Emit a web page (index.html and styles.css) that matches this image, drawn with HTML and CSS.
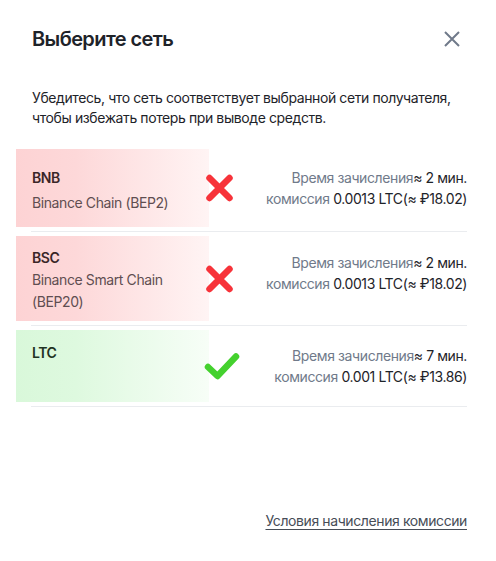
FILE: index.html
```html
<!DOCTYPE html>
<html lang="ru">
<head>
<meta charset="utf-8">
<link rel="stylesheet" href="styles.css">
</head>
<body>
<div class="modal">
  <div class="header">
    <h1 class="title">Выберите сеть</h1>
    <button class="close" aria-label="Закрыть">
      <svg width="18" height="18" viewBox="0 0 18 18"><path d="M2 2 L16 16 M16 2 L2 16" stroke="#707a8a" stroke-width="2" fill="none"/></svg>
    </button>
  </div>
  <p class="desc">Убедитесь, что сеть соответствует выбранной сети получателя, чтобы избежать потерь при выводе средств.</p>
  <div class="list">
    <div class="row">
      <div class="block bad h1">
        <div class="left">
          <div class="name">BNB</div>
          <div class="sub">Binance Chain (BEP2)</div>
        </div>
        <div class="right">
          <div><span class="lbl">Время зачисления</span>≈ 2 мин.</div>
          <div><span class="lbl">комиссия </span>0.0013 LTC(≈ ₽18.02)</div>
        </div>
      </div>
      <svg class="mark cross" width="29" height="29" viewBox="0 0 29 29"><path d="M4.5 4.5 L24.5 24.5 M24.5 4.5 L4.5 24.5" stroke="#f7333a" stroke-width="6.5" stroke-linecap="round" fill="none"/></svg>
    </div>
    <div class="row">
      <div class="block bad h2">
        <div class="left">
          <div class="name">BSC</div>
          <div class="sub">Binance Smart Chain<br>(BEP20)</div>
        </div>
        <div class="right">
          <div><span class="lbl">Время зачисления</span>≈ 2 мин.</div>
          <div><span class="lbl">комиссия </span>0.0013 LTC(≈ ₽18.02)</div>
        </div>
      </div>
      <svg class="mark cross" width="29" height="29" viewBox="0 0 29 29"><path d="M4.5 4.5 L24.5 24.5 M24.5 4.5 L4.5 24.5" stroke="#f7333a" stroke-width="6.5" stroke-linecap="round" fill="none"/></svg>
    </div>
    <div class="row">
      <div class="block good h3">
        <div class="left">
          <div class="name">LTC</div>
          <div class="sub"></div>
        </div>
        <div class="right">
          <div><span class="lbl">Время зачисления</span>≈ 7 мин.</div>
          <div><span class="lbl">комиссия </span>0.001 LTC(≈ ₽13.86)</div>
        </div>
      </div>
      <svg class="mark check" width="36" height="29" viewBox="0 0 36 29"><path d="M4 15.5 L13.5 24.5 L32 5" stroke="#44d12e" stroke-width="6.5" stroke-linecap="round" stroke-linejoin="round" fill="none"/></svg>
    </div>
  </div>
  <div class="footer">
    <a class="link" href="#">Условия начисления комиссии</a>
  </div>
</div>
</body>
</html>
```

FILE: styles.css
```css
* { box-sizing: border-box; }
html, body {
  margin: 0;
  padding: 0;
  background: #ffffff;
}
body {
  font-family: Inter, "Noto Sans", sans-serif;
  color: #1e2329;
  letter-spacing: -0.4px;
}
.modal {
  min-height: 561px;
  display: flex;
  flex-direction: column;
  padding: 23px 29px 30px 31px;
}
.header {
  display: flex;
  justify-content: space-between;
  align-items: center;
  height: 32px;
}
.title {
  margin: 0 0 0 1px;
  font-size: 20px;
  line-height: 28px;
  font-weight: 600;
  letter-spacing: -0.6px;
  color: #1e2329;
}
.close {
  border: 0;
  background: none;
  padding: 0;
  margin-right: 6px;
  width: 18px;
  height: 18px;
  display: flex;
}
.desc {
  margin: 33px 0 0 1px;
  font-size: 14px;
  line-height: 20px;
  color: #1e2329;
}
.list {
  margin-top: 17px;
}
.row {
  position: relative;
  padding: 4px 0;
  border-bottom: 1px solid #eaecef;
}
.block {
  display: flex;
  justify-content: space-between;
  align-items: center;
  margin-left: -15px;
  padding-left: 16px;
}
.block.h1 { height: 78px; }
.block.h2 { height: 85px; }
.block.h3 { height: 72px; }
.h1 .left { padding-top: 5px; }
.h2 .left { padding-top: 4px; gap: 1px; }
.h2 .right { margin-bottom: 11px; }
.bad {
  background: linear-gradient(to right, #fdd3d4 0px, #fdd8d9 60px, #fff4f4 193px, #ffffff 193px);
}
.good {
  background: linear-gradient(to right, #d9f8da 0px, #def9df 60px, #f7fef7 193px, #ffffff 193px);
}
.left {
  display: flex;
  flex-direction: column;
  gap: 4px;
}
.name {
  font-size: 14px;
  line-height: 20px;
  font-weight: 600;
  color: #3a2628;
}
.sub {
  font-size: 14px;
  line-height: 22px;
  min-height: 22px;
  color: #5f4e51;
}
.good .name { color: #1f3323; }
.right {
  text-align: right;
  font-size: 14px;
  line-height: 21px;
  color: #1e2329;
}
.lbl { color: #707a8a; }
.mark {
  position: absolute;
  top: 50%;
  transform: translateY(-50%);
}
.cross { left: 174px; }
.check { left: 173px; }
.footer {
  margin-top: auto;
  display: flex;
  justify-content: flex-end;
}
.link {
  font-size: 14px;
  line-height: 20px;
  color: #474d57;
  text-decoration: underline;
  text-underline-offset: 3px;
}
```
